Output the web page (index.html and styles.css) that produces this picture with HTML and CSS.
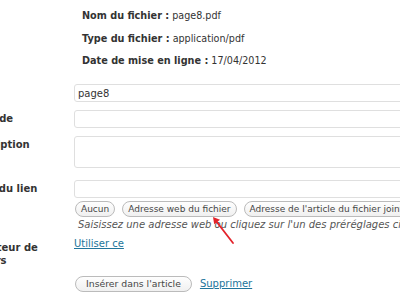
FILE: index.html
```html
<!DOCTYPE html>
<html lang="fr">
<head>
    <meta charset="UTF-8">
    <title>Modifier le média</title>
    <link rel="stylesheet" href="styles.css">
</head>
<body>
    <div class="media">
        <div class="info">
            <p><strong>Nom du fichier :</strong> page8.pdf</p>
            <p><strong>Type du fichier :</strong> application/pdf</p>
            <p><strong>Date de mise en ligne :</strong> 17/04/2012</p>
        </div>

        <div class="row">
            <label class="label">Titre</label>
            <div class="field"><input class="text" type="text" value="page8"></div>
        </div>

        <div class="row">
            <label class="label">Légende</label>
            <div class="field"><input class="text" type="text" value=""></div>
        </div>

        <div class="row row-tall">
            <label class="label">Description</label>
            <div class="field"><textarea class="text area"></textarea></div>
        </div>

        <div class="row row-url">
            <label class="label">Texte du lien</label>
            <div class="field">
                <input class="text" type="text" value="">
                <div class="buttons">
                    <button class="button">Aucun</button>
                    <button class="button">Adresse web du fichier</button>
                    <button class="button">Adresse de l'article du fichier joint</button>
                </div>
                <p class="help">Saisissez une adresse web ou cliquez sur l'un des préréglages ci-dessus.</p>
            </div>
        </div>

        <div class="row row-thumb">
            <label class="label label-wrap">Compteur de fichiers</label>
            <div class="field"><a href="#" class="link">Utiliser ce</a></div>
        </div>

        <div class="row">
            <span class="label"></span>
            <div class="field actions">
                <button class="button button-insert">Insérer dans l'article</button>
                <a href="#" class="link">Supprimer</a>
            </div>
        </div>
    </div>

    <!-- red annotation arrow -->
    <svg class="arrow" width="40" height="40" viewBox="200 210 40 40">
        <line x1="233" y1="243" x2="216" y2="221" stroke="#e3232b" stroke-width="1.8" stroke-linecap="round"/>
        <polygon points="213,217 220,219.8 214.2,224.2" fill="#e3232b"/>
    </svg>
</body>
</html>
```

FILE: styles.css
```css
body {
    margin: 0;
    overflow: hidden;
    font-family: "DejaVu Sans", sans-serif;
    color: #333;
    background: #fff;
}
.media {
    margin-left: -35px;
    width: 640px;
}
.info {
    padding: 9px 0 0 117px;
    display: flex;
    flex-direction: column;
    gap: 8.5px;
    margin-bottom: 16px;
}
.info p {
    margin: 0;
    font-size: 9.6px;
    line-height: 14px;
    white-space: nowrap;
}
.info strong {
    font-size: 9.7px;
}
.row {
    display: flex;
    margin-bottom: 8px;
}
.row-tall {
    margin-bottom: 12px;
}
.row-url {
    margin-bottom: 6px;
}
.row-thumb {
    margin-bottom: 9.5px;
}
.label {
    flex: none;
    width: 109px;
    font-size: 10px;
    font-weight: bold;
    line-height: 18px;
    white-space: nowrap;
}
.label-wrap {
    white-space: normal;
    line-height: 13px;
    padding-top: 3.5px;
}
.field {
    flex: none;
    width: 520px;
    font-size: 10px;
    line-height: 14px;
}
.text {
    display: block;
    box-sizing: border-box;
    width: 500px;
    height: 18px;
    margin: 0;
    padding: 0 3px;
    border: 1px solid #dfdfdf;
    border-radius: 3px;
    background: #fff;
    font-family: "DejaVu Sans", sans-serif;
    font-size: 10px;
    color: #333;
    outline: none;
}
.area {
    height: 32px;
    resize: none;
}
.buttons {
    display: flex;
    gap: 7px;
    margin: 3px 0 0 1px;
    white-space: nowrap;
}
.button {
    flex: none;
    height: 16px;
    padding: 0 5px;
    border: 1px solid #bbb;
    border-radius: 11px;
    background: linear-gradient(#fefefe, #f0f0f0);
    font-family: "DejaVu Sans", sans-serif;
    font-size: 9px;
    line-height: 14px;
    color: #464646;
    cursor: pointer;
}
.button-insert {
    padding: 0 10px;
    font-size: 9.3px;
}
.help {
    margin: 1px 0 0 4px;
    font-size: 10px;
    font-style: italic;
    line-height: 13px;
    color: #555;
    white-space: nowrap;
}
.link {
    font-size: 10px;
    line-height: 14px;
    color: #21759b;
}
.actions {
    display: flex;
    align-items: center;
    gap: 8px;
    margin-left: 1px;
}
.arrow {
    position: absolute;
    left: 200px;
    top: 210px;
}
```
